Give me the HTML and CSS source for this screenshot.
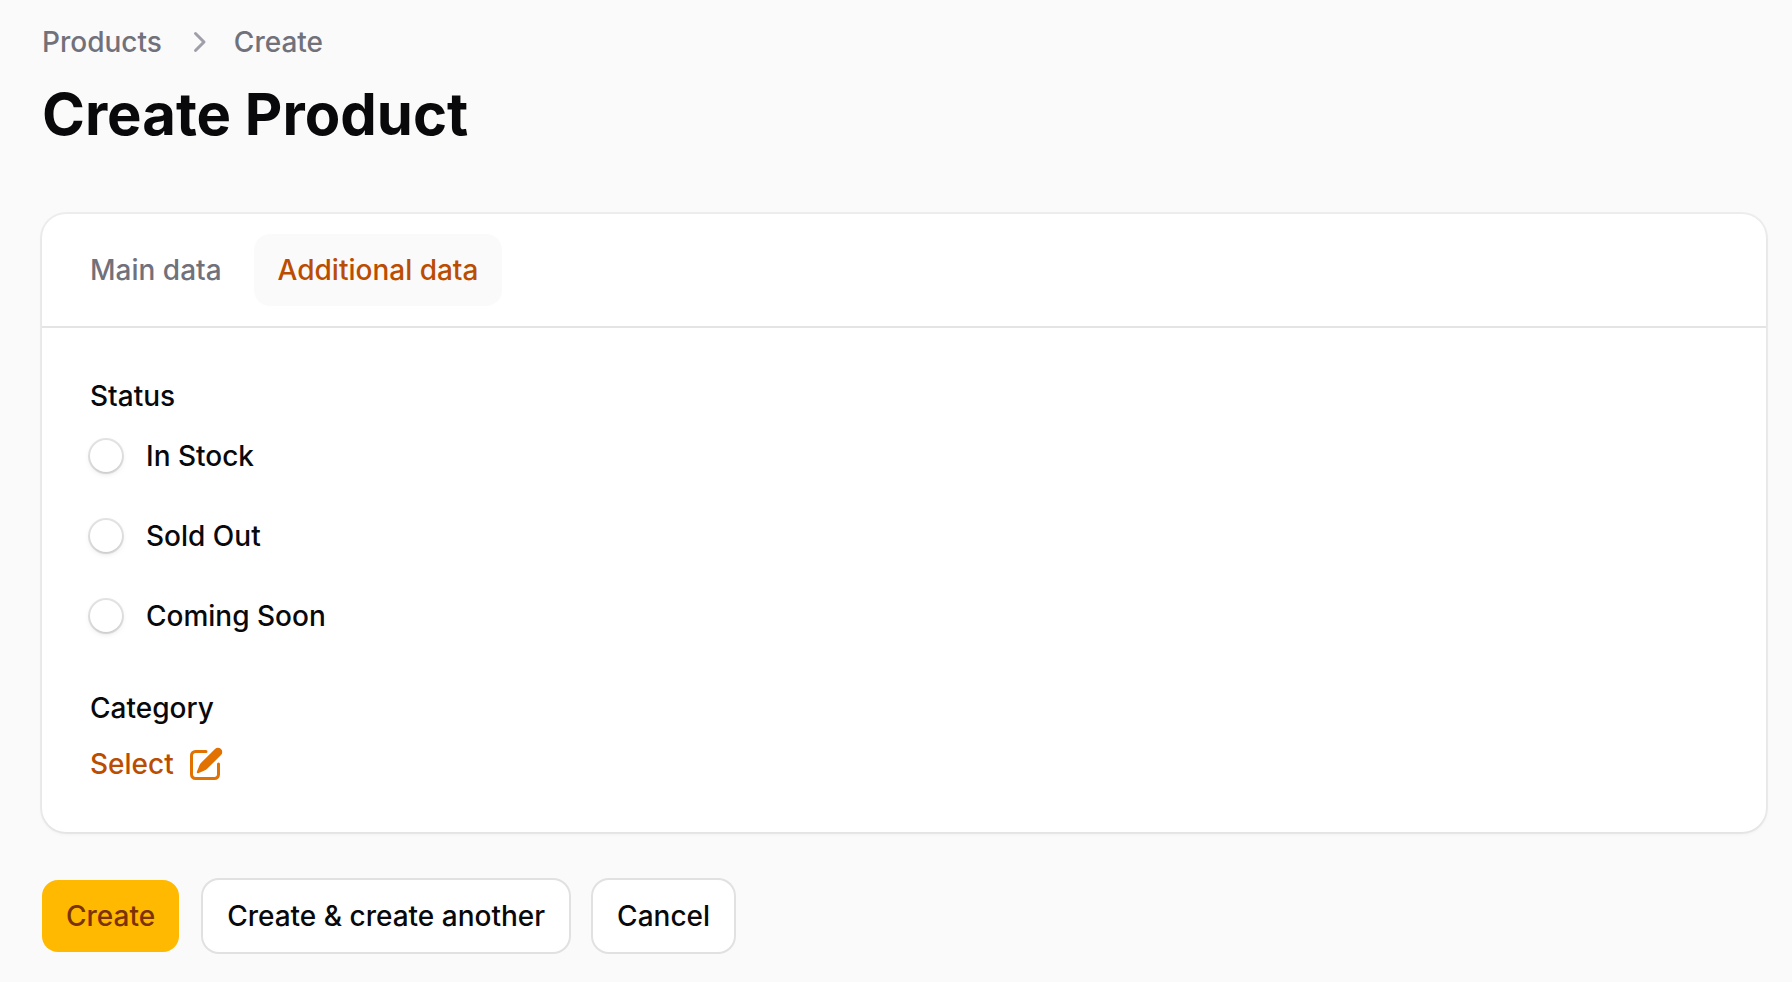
FILE: index.html
```html
<!DOCTYPE html>
<html lang="en">
<head>
  <meta charset="utf-8">
  <meta name="viewport" content="width=device-width, initial-scale=1">
  <title>Create Product</title>
  <link rel="stylesheet" href="styles.css">
</head>
<body>
  <main class="page">
    <header class="header">
      <nav class="breadcrumbs" aria-label="Breadcrumb">
        <a href="#products">Products</a>
        <svg class="icon" viewBox="0 0 20 20" fill="currentColor" aria-hidden="true"><path fill-rule="evenodd" clip-rule="evenodd" d="M8.22 5.22a.75.75 0 0 1 1.06 0l4.25 4.25a.75.75 0 0 1 0 1.06l-4.25 4.25a.75.75 0 0 1-1.06-1.06L11.94 10 8.22 6.28a.75.75 0 0 1 0-1.06Z"/></svg>
        <a href="#create">Create</a>
      </nav>
      <h1 class="title">Create Product</h1>
    </header>
    <form class="form">
      <section class="card">
        <div class="tabs" role="tablist">
          <button class="tab" type="button" role="tab" aria-selected="false">Main data</button>
          <button class="tab tab-active" type="button" role="tab" aria-selected="true">Additional data</button>
        </div>
        <div class="panel" role="tabpanel">
          <fieldset class="field">
            <legend class="label">Status</legend>
            <div class="options">
              <label class="option"><input class="radio" type="radio" name="status" value="in-stock">In Stock</label>
              <label class="option"><input class="radio" type="radio" name="status" value="sold-out">Sold Out</label>
              <label class="option"><input class="radio" type="radio" name="status" value="coming-soon">Coming Soon</label>
            </div>
          </fieldset>
          <div class="category">
            <span class="label" id="category-label">Category</span>
            <button class="select-action" type="button" aria-describedby="category-label">
              Select
              <svg class="icon" viewBox="0 0 20 20" fill="currentColor" aria-hidden="true"><path d="m5.433 13.917 1.262-3.155A4 4 0 0 1 7.58 9.42l6.92-6.918a2.121 2.121 0 0 1 3 3l-6.92 6.918c-.383.383-.84.685-1.343.886l-3.154 1.262a.5.5 0 0 1-.65-.65Z"/><path d="M3.5 5.75c0-.69.56-1.25 1.25-1.25H10A.75.75 0 0 0 10 3H4.75A2.75 2.75 0 0 0 2 5.75v9.5A2.75 2.75 0 0 0 4.75 18h9.5A2.75 2.75 0 0 0 17 15.25V10a.75.75 0 0 0-1.5 0v5.25c0 .69-.56 1.25-1.25 1.25h-9.5c-.69 0-1.25-.56-1.25-1.25v-9.5Z"/></svg>
            </button>
          </div>
        </div>
      </section>
      <div class="actions">
        <button class="button button-primary" type="submit">Create</button>
        <button class="button" type="button">Create &amp; create another</button>
        <button class="button" type="button">Cancel</button>
      </div>
    </form>
  </main>
</body>
</html>
```
FILE: styles.css
```css
*, *::before, *::after {
  box-sizing: border-box;
}

body {
  margin: 0;
  background: #fafafa;
  color: #09090b;
  font: 500 28px/40px Inter, "Liberation Sans", sans-serif;
}

button {
  border: 0;
  padding: 0;
  background: none;
  color: inherit;
  font: inherit;
  cursor: pointer;
}

.page {
  display: flex;
  flex-direction: column;
  gap: 64px;
  padding: 22px 26px 30px 42px;
}

.header {
  display: flex;
  flex-direction: column;
  gap: 16px;
}

.breadcrumbs {
  display: flex;
  align-items: center;
  gap: 16px;
  color: #9f9fa9;
}

.breadcrumbs a {
  color: #71717b;
  text-decoration: none;
}

.icon {
  flex: none;
  width: 40px;
  height: 40px;
}

.title {
  margin: 0;
  font-size: 58px;
  font-weight: 700;
  line-height: 72px;
}

.form {
  display: flex;
  flex-direction: column;
  gap: 48px;
}

.card {
  border-radius: 24px;
  background: #fff;
  box-shadow: 0 0 0 2px rgba(9, 9, 11, 0.05), 0 2px 4px rgba(0, 0, 0, 0.05);
}

.tabs {
  display: flex;
  gap: 8px;
  padding: 20px 24px;
  border-bottom: 2px solid #e4e4e7;
}

.tab {
  padding: 16px 24px;
  border-radius: 16px;
  color: #71717b;
}

.tab-active {
  background: #fafafa;
  color: #bb4d00;
}

.panel {
  display: flex;
  flex-direction: column;
  gap: 52px;
  padding: 48px;
}

.field {
  min-width: 0;
  margin: 0;
  border: 0;
  padding: 0;
}

.label {
  padding: 0;
}

.options {
  display: flex;
  flex-direction: column;
  align-items: flex-start;
  gap: 40px;
  padding-top: 20px;
}

.option {
  display: flex;
  align-items: center;
  gap: 24px;
}

.radio {
  appearance: none;
  width: 32px;
  height: 32px;
  margin: 0;
  border-radius: 50%;
  background: #fff;
  box-shadow: 0 0 0 2px rgba(9, 9, 11, 0.1), 0 2px 6px rgba(0, 0, 0, 0.1), 0 2px 4px -2px rgba(0, 0, 0, 0.1);
}

.radio:checked {
  border: 10px solid #e17100;
}

.category {
  display: flex;
  flex-direction: column;
  align-items: flex-start;
  gap: 16px;
}

.select-action {
  display: flex;
  align-items: center;
  gap: 12px;
  color: #bb4d00;
}

.select-action .icon {
  color: #e17100;
}

.actions {
  display: flex;
  flex-wrap: wrap;
  gap: 24px;
}

.button {
  padding: 16px 24px;
  border-radius: 16px;
  background: #fff;
  box-shadow: 0 0 0 2px rgba(9, 9, 11, 0.1);
}

.button-primary {
  background: #ffb900;
  color: #7b3306;
  box-shadow: none;
}
```
